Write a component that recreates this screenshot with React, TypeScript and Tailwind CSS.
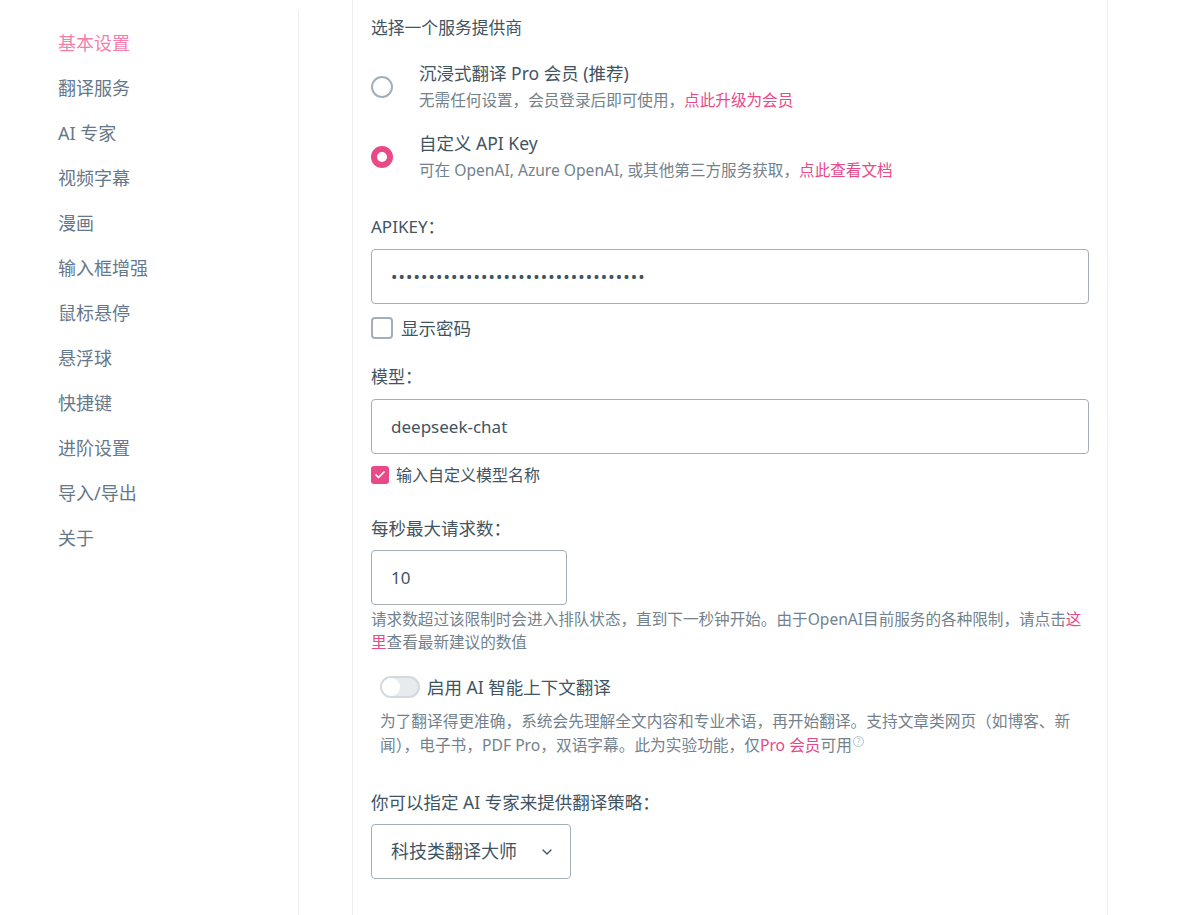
import { ChevronDown, Check } from "lucide-react"

const menu = [
    "基本设置",
    "翻译服务",
    "AI 专家",
    "视频字幕",
    "漫画",
    "输入框增强",
    "鼠标悬停",
    "悬浮球",
    "快捷键",
    "进阶设置",
    "导入/导出",
    "关于",
]

function Sidebar() {
    return (
        <nav className="w-[299px] shrink-0 mt-[11px] border-r border-[#eceff1] pl-[58px] pt-[10px]">
            {menu.map((item, i) => (
                <div
                    key={item}
                    className={`h-[45px] flex items-center text-[18px] ${i === 0 ? "text-[#f47fab]" : "text-[#66788a]"}`}
                >
                    {item}
                </div>
            ))}
        </nav>
    )
}

function Radio({ checked }: { checked?: boolean }) {
    return checked ? (
        <span className="size-[22px] rounded-full border-[6px] border-[#e94a87] bg-white shrink-0" />
    ) : (
        <span className="size-[22px] rounded-full border-2 border-[#a2afb9] bg-white shrink-0" />
    )
}

function ProviderOption({ checked, title, desc, link }: { checked?: boolean; title: string; desc: string; link: string }) {
    return (
        <div className="flex items-center">
            <div className="w-[48px] flex items-center">
                <Radio checked={checked} />
            </div>
            <div className="flex flex-col">
                <div className="h-[26px] leading-[26px] text-[17.5px] text-[#415462]">{title}</div>
                <div className="h-[28px] leading-[28px] text-[15.6px] text-[#73828c] whitespace-nowrap">
                    {desc}
                    <a className="text-[#e94a87]">{link}</a>
                </div>
            </div>
        </div>
    )
}

function Label({ children, className = "" }: { children: React.ReactNode; className?: string }) {
    return <div className={`h-[26px] leading-[26px] text-[#415462] ${className}`}>{children}</div>
}

const inputCls =
    "h-[55px] w-full rounded-[4px] border border-[#a2afb9] bg-white px-[19px] text-[17px] text-[#415462] outline-none"

export default function App() {
    return (
        <div
            className="flex w-full h-[915px] overflow-hidden bg-white"
            style={{ fontFamily: '"Noto Sans", "Noto Sans CJK SC", sans-serif' }}
        >
            <Sidebar />

            <main className="ml-[53px] w-[756px] shrink-0 border-x border-[#eceff1] px-[18px] pt-[15px]">
                <Label className="text-[16.8px]">选择一个服务提供商</Label>

                <div className="mt-[19px] flex flex-col gap-[16px]">
                    <ProviderOption
                        title="沉浸式翻译 Pro 会员 (推荐)"
                        desc="无需任何设置，会员登录后即可使用，"
                        link="点此升级为会员"
                    />
                    <ProviderOption
                        checked
                        title="自定义 API Key"
                        desc="可在 OpenAI, Azure OpenAI, 或其他第三方服务获取，"
                        link="点此查看文档"
                    />
                </div>

                <Label className="mt-[30px] text-[17px]">APIKEY：</Label>
                <input
                    type="password"
                    readOnly
                    value="sk-0123456789abcdef0123456789abcde"
                    className={`${inputCls} mt-[9px] tracking-[1.1px]`}
                />
                <label className="mt-[13px] h-[22px] flex items-center gap-[8px]">
                    <span className="size-[22px] rounded-[4px] border-2 border-[#a2afb9] bg-white" />
                    <span className="text-[17.5px] text-[#415462]">显示密码</span>
                </label>

                <Label className="mt-[25px] text-[17px]">模型：</Label>
                <input readOnly value="deepseek-chat" className={`${inputCls} mt-[9px]`} />
                <label className="mt-[10px] h-[22px] flex items-center gap-[7px]">
                    <span className="size-[18px] rounded-[3px] bg-[#e94a87] flex items-center justify-center">
                        <Check size={12} strokeWidth={3.5} color="white" />
                    </span>
                    <span className="text-[16px] text-[#415462]">输入自定义模型名称</span>
                </label>

                <Label className="mt-[29px] text-[17.5px]">每秒最大请求数：</Label>
                <input readOnly value="10" className={`${inputCls} mt-[9px] !w-[196px]`} />
                <p className="mt-[3px] text-[15.6px] leading-[23px] text-[#73828c]">
                    请求数超过该限制时会进入排队状态，直到下一秒钟开始。由于OpenAI目前服务的各种限制，请点击
                    <a className="text-[#e94a87]">这里</a>
                    查看最新建议的数值
                </p>

                <div className="pl-[9px]">
                    <div className="mt-[21px] h-[24px] flex items-center gap-[7px]">
                        <span className="w-[40px] h-[22px] rounded-full bg-[#e7ebee] border-2 border-[#d3d9de] flex items-center">
                            <span className="size-[18px] rounded-full bg-white" />
                        </span>
                        <span className="text-[17.5px] text-[#415462]">启用 AI 智能上下文翻译</span>
                    </div>
                    <p className="mt-[10px] text-[15.7px] leading-[24px] text-[#73828c]">
                        为了翻译得更准确，系统会先理解全文内容和专业术语，再开始翻译。支持文章类网页（如博客、新闻），电子书，PDF Pro，双语字幕。此为实验功能，仅
                        <a className="text-[#e94a87]">Pro 会员</a>
                        可用
                        <span className="inline-flex align-top mt-[3px] ml-[1px] size-[11px] rounded-full border border-[#b8c2c9] text-[8px] leading-none items-center justify-center text-[#b8c2c9]">
                            ?
                        </span>
                    </p>
                </div>

                <Label className="mt-[32px] text-[17.5px]">你可以指定 AI 专家来提供翻译策略：</Label>
                <div className="mt-[9px] h-[55px] w-[200px] rounded-[4px] border border-[#a2afb9] flex items-center justify-between pl-[19px] pr-[15px] text-[18px] text-[#415462]">
                    <span>科技类翻译大师</span>
                    <ChevronDown size={16} strokeWidth={2} color="#415462" />
                </div>
            </main>
        </div>
    )
}
